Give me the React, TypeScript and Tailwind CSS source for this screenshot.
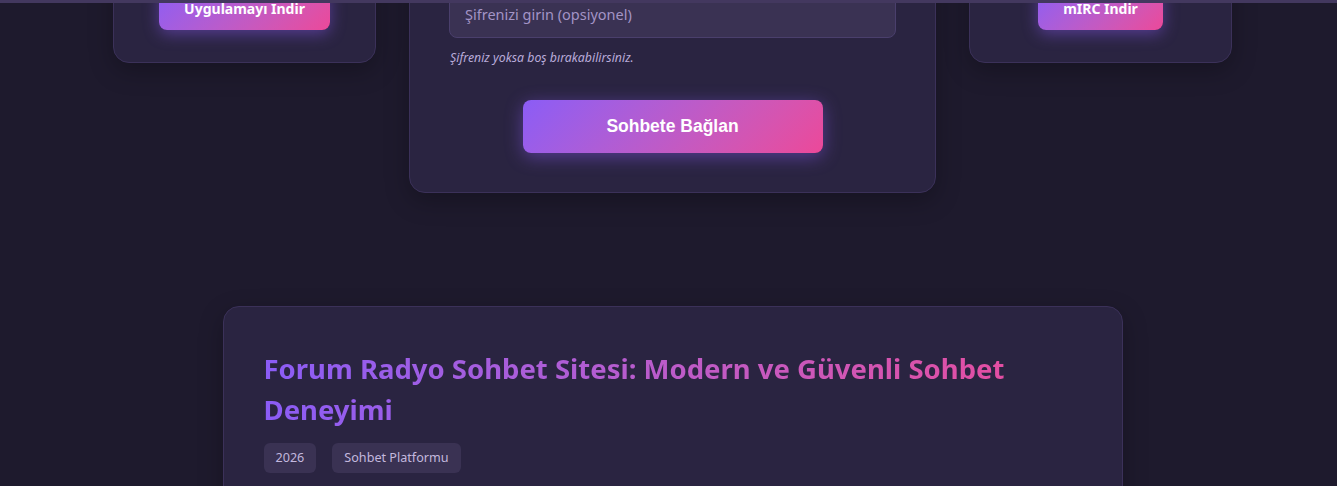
export default function App() {
  return (
    <div className="relative h-[486px] overflow-hidden bg-[#1e1a2d] font-['Noto_Sans',sans-serif] text-white">
      {/* fixed header edge */}
      <div className="absolute inset-x-0 top-0 z-10 h-[3px] bg-[#43385f]" />

      <div className="pl-2">
        {/* connect row, scrolled partly out of view */}
        <div className="mx-auto -mt-[217px] flex w-[1119px] items-start gap-[33px]">
          <div className="flex h-[280px] w-[263px] flex-col items-center rounded-2xl border border-[#3b3159] bg-[#2a2441] px-6 pt-8 pb-8 shadow-[0_8px_24px_rgba(0,0,0,0.25)]">
            <h3 className="text-lg font-bold">Mobil Uygulama</h3>
            <p className="mt-2 text-center text-sm text-[#b8a9d9]">Android ve iOS için sohbet uygulaması.</p>
            <a className="mt-auto flex h-[44px] items-center rounded-lg bg-linear-135 from-[#8b5cf6] to-[#ec4899] px-[25px] text-[14px] font-bold shadow-[0_4px_16px_rgba(139,92,246,0.45)]">
              Uygulamayı İndir
            </a>
          </div>

          <div className="flex h-[410px] w-[527px] flex-col justify-between rounded-2xl border border-[#3b3159] bg-[#2a2441] px-[39px] pt-8 pb-[39px] shadow-[0_8px_24px_rgba(0,0,0,0.25)]">
            <div>
              <h3 className="text-center text-xl font-bold">Sohbete Katıl</h3>
              <input
                placeholder="Rumuzunuzu girin"
                className="mt-5 h-[48px] w-full rounded-lg border border-[#4a3f6c] bg-[#3a3253] px-[15px] text-[14.5px] text-white placeholder:text-[#a394c6] outline-none"
              />
            </div>
            <div className="flex flex-col">
              <input
                placeholder="Şifrenizi girin (opsiyonel)"
                className="h-[48px] w-full rounded-lg border border-[#4a3f6c] bg-[#3a3253] px-[15px] text-[14.5px] text-white placeholder:text-[#a394c6] outline-none"
              />
              <p className="mt-[10px] pl-[1px] text-[12.3px] leading-5 italic text-[#b9abd9]">Şifreniz yoksa boş bırakabilirsiniz.</p>
              <button className="mx-auto mt-[32px] h-[53px] w-[300px] rounded-lg bg-linear-135 from-[#8b5cf6] to-[#ec4899] font-['Liberation_Sans',Arial,sans-serif] text-[17.5px] font-bold text-white shadow-[0_4px_18px_rgba(139,92,246,0.45)]">
                Sohbete Bağlan
              </button>
            </div>
          </div>

          <div className="flex h-[280px] w-[263px] flex-col items-center rounded-2xl border border-[#3b3159] bg-[#2a2441] px-6 pt-8 pb-8 shadow-[0_8px_24px_rgba(0,0,0,0.25)]">
            <h3 className="text-lg font-bold">mIRC ile Bağlan</h3>
            <p className="mt-2 text-center text-sm text-[#b8a9d9]">Klasik IRC istemcisi ile sohbet.</p>
            <a className="mt-auto flex h-[44px] items-center rounded-lg bg-linear-135 from-[#8b5cf6] to-[#ec4899] px-[25px] text-[14px] font-bold shadow-[0_4px_16px_rgba(139,92,246,0.45)]">
              mIRC İndir
            </a>
          </div>
        </div>

        {/* article */}
        <div className="mx-auto mt-[113px] w-[900px] rounded-2xl border border-[#3b3159] bg-[#2a2441] px-10 pt-[41px] pb-10 shadow-[0_8px_24px_rgba(0,0,0,0.25)]">
          <h2 className="bg-gradient-to-r from-[#8b5cf6] to-[#ec4899] bg-clip-text text-[27.5px] leading-[41px] font-bold text-transparent">
            Forum Radyo Sohbet Sitesi: Modern ve Güvenli Sohbet Deneyimi
          </h2>
          <div className="mt-[13px] flex gap-4 text-[12.6px]">
            <span className="flex h-[30px] items-center rounded-md bg-[#3a3253] px-3 text-[#c3b8de]">2026</span>
            <span className="flex h-[30px] items-center rounded-md bg-[#3a3253] px-3 text-[#c3b8de]">Sohbet Platformu</span>
          </div>
          <p className="mt-6 text-[16px] leading-7 text-[#cfc6e6]">
            Forum Radyo, kullanıcılarına modern, hızlı ve güvenli bir sohbet ortamı sunan köklü bir sohbet platformudur.
          </p>
        </div>
      </div>
    </div>
  );
}
